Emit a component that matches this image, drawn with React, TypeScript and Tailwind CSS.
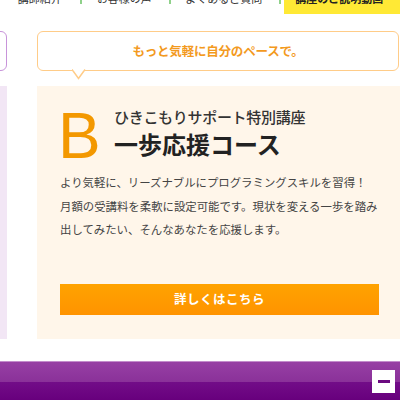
import React from "react";

const jp = { fontFamily: '"Noto Sans CJK JP", "Noto Sans", sans-serif' };

export default function App() {
  return (
    <div className="relative w-[400px] h-[400px] overflow-hidden bg-white" style={jp}>
      {/* top nav */}
      <div className="flex h-[24px] mt-[-10px] text-[11px] text-[#333] leading-none">
        <div className="w-[83px] flex items-center justify-center"><span className="mt-[-8px]">講師紹介</span></div>
        <div className="w-[93px] relative flex items-center justify-center">
          <div className="absolute left-0 top-0 h-[14px] w-[2px] bg-[#8fd18a]" />
          <span className="mt-[-8px]">お客様の声</span>
        </div>
        <div className="w-[114px] relative flex items-center justify-center">
          <div className="absolute left-0 top-0 h-[14px] w-[2px] bg-[#8fd18a]" />
          <span className="mt-[-8px]">よくあるご質問</span>
        </div>
        <div className="relative w-[6px]">
          <div className="absolute left-0 top-0 h-[14px] w-[2px] bg-[#8fd18a]" />
        </div>
        <div className="w-[120px] flex items-center pl-[11px] bg-[#ffe935] font-bold text-[#222]"><span className="mt-[-8px]">講座のご説明動画</span></div>
      </div>

      {/* main */}
      <div className="flex mt-[17px]">
        <div className="w-[7px] flex flex-col">
          <div className="h-[40px] ml-[-20px] w-[27px] border-[1.5px] border-[#c894da] rounded-[6px]" />
          <div className="mt-[15px] h-[253px] bg-[#f2e6f5]" />
        </div>
        <div className="ml-[30px] w-[363px] flex flex-col">
          <div className="relative h-[40px] w-[362px] border-[1.5px] border-[#ffcc88] rounded-[6px] flex items-center justify-center">
            <span className="text-[12.5px] font-bold text-[#f39a1e] tracking-[-0.2px]">もっと気軽に自分のペースで。</span>
            <svg className="absolute left-[34px] top-[37px]" width="14" height="11" viewBox="0 0 14 11">
              <path d="M0 0.5 L6.5 9.5 L13 0.5" fill="white" stroke="#ffcc88" strokeWidth="1.5" />
              <rect x="1.5" y="0" width="10" height="1.2" fill="white" />
            </svg>
          </div>
          <div className="mt-[15px] h-[253px] bg-[#fff6ea] pl-[23px] pr-[21px] pt-[18px] flex flex-col">
            <div className="flex items-start">
              <div className="text-[64px] leading-none text-[#f39800] w-[56px] ml-[-2px]" style={{ fontFamily: '"Liberation Sans", sans-serif' }}>B</div>
              <div className="flex flex-col pt-[5px]">
                <div className="text-[15px] font-medium leading-none text-[#333] tracking-[-0.3px]">ひきこもりサポート特別講座</div>
                <div className="text-[24px] font-bold leading-none text-[#222] mt-[8px]">一歩応援コース</div>
              </div>
            </div>
            <p className="mt-[3px] text-[11.4px] leading-[23.5px] text-[#444] whitespace-nowrap">
              より気軽に、リーズナブルにプログラミングスキルを習得！<br />
              月額の受講料を柔軟に設定可能です。現状を変える一歩を踏み<br />
              出してみたい、そんなあなたを応援します。
            </p>
            <div className="mt-[42px] h-[31px] w-[319px] bg-gradient-to-b from-[#ffa300] to-[#ff9300] flex items-center justify-center">
              <span className="text-[12.5px] font-bold text-white tracking-[0.5px]">詳しくはこちら</span>
            </div>
          </div>
        </div>
      </div>

      {/* footer */}
      <div className="absolute left-0 top-[361px] w-[400px] h-[39px] flex flex-col">
        <div className="h-[1px] bg-[#c48ccc]" />
        <div className="h-[20px] bg-gradient-to-b from-[#973fa4] to-[#8a3199]" />
        <div className="flex-1 bg-gradient-to-b from-[#720d88] to-[#68007d]" />
        <div className="absolute left-[372px] top-[9px] w-[23px] h-[23px] bg-white flex items-center justify-center">
          <div className="w-[12px] h-[3px] bg-[#6b0a80]" />
        </div>
      </div>
    </div>
  );
}
